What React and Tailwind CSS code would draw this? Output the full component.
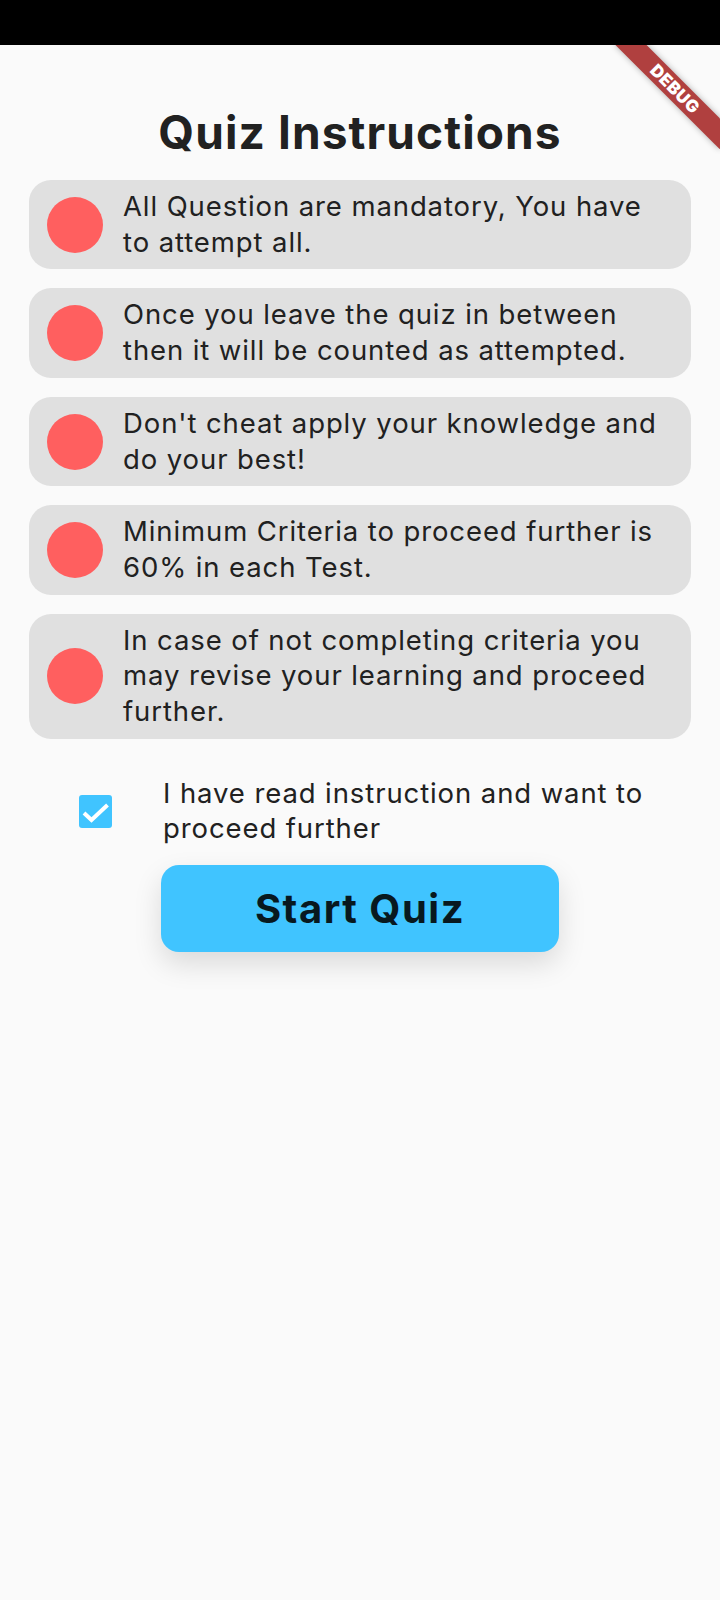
import React, { useState } from "react";

const rules = [
  "All Question are mandatory, You have to attempt all.",
  "Once you leave the quiz in between then it will be counted as attempted.",
  "Don't cheat apply your knowledge and do your best!",
  "Minimum Criteria to proceed further is 60% in each Test.",
  "In case of not completing criteria you may revise your learning and proceed further.",
];

const App = () => {
  const [agreed, setAgreed] = useState(true);

  return (
    <div className="w-[720px] min-h-[1600px] bg-[#fafafa] flex flex-col" style={{ fontFamily: "Inter, Roboto, sans-serif" }}>
      {/* status bar */}
      <div className="h-[45px] bg-black shrink-0" />

      <div className="relative flex-1 overflow-hidden">
        {/* debug ribbon */}
        <div className="absolute left-[601px] top-[33px] w-[148px] h-[22px] rotate-45 bg-[#b0403f] shadow-[0_0_6px_rgba(0,0,0,0.3)] flex items-center justify-center">
          <span className="text-white text-[17px] font-black leading-none tracking-[0.5px]">DEBUG</span>
        </div>

        <h1 className="mt-[61px] text-center text-[46px] leading-[52px] font-bold tracking-[1.1px] text-[#212121]">
          Quiz Instructions
        </h1>

        <div className="mt-[22px] mx-[29px] flex flex-col gap-[19px]">
          {rules.map((r) => (
            <div key={r} className="bg-[#e0e0e0] rounded-[22px] py-[9px] pl-[18px] pr-[22px] flex items-center gap-[20px]">
              <div className="w-[56px] h-[56px] rounded-full bg-[#ff5f5f] shrink-0" />
              <p className="text-[27.5px] leading-[35.7px] tracking-[0.9px] text-[#212121]">{r}</p>
            </div>
          ))}
        </div>

        {/* agreement */}
        <div className="mt-[37px] flex items-center pl-[79px] pr-[30px]">
          <button
            onClick={() => setAgreed(!agreed)}
            className={`w-[33px] h-[33px] rounded-[3px] shrink-0 flex items-center justify-center ${agreed ? "bg-[#40c4ff]" : "border-[3px] border-[#555]"}`}
          >
            {agreed && (
              <svg width="33" height="33" viewBox="0 0 33 33" fill="none">
                <path d="M5 18l7.5 7L28.5 10" stroke="white" strokeWidth="4" />
              </svg>
            )}
          </button>
          <p className="ml-[51px] text-[27.5px] leading-[35.7px] tracking-[0.9px] text-[#212121]">
            I have read instruction and want to proceed further
          </p>
        </div>

        <div className="mt-[18px] flex justify-center">
          <button className="w-[398px] h-[87px] rounded-[18px] bg-[#40c4ff] text-[40px] font-bold tracking-[1.5px] text-[#08191f] shadow-[0_12px_28px_rgba(0,0,0,0.13)]">
            Start Quiz
          </button>
        </div>
      </div>
    </div>
  );
};

export default App;
